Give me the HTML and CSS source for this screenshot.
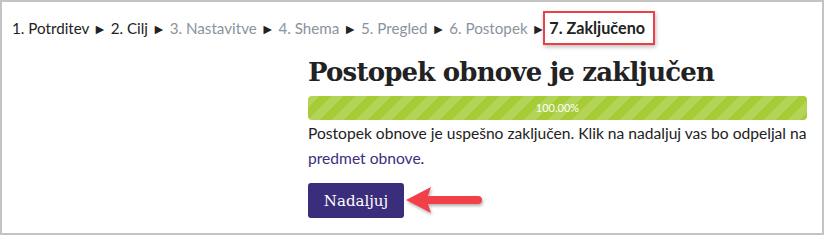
FILE: index.html
```html
<!DOCTYPE html>
<html lang="sl">
<head>
<meta charset="utf-8">
<title>Postopek obnove je zaključen</title>
<link rel="stylesheet" href="styles.css">
</head>
<body>
<div class="frame">
  <nav class="steps">
    <span class="step done">1. Potrditev</span>
    <span class="sep">►</span>
    <span class="step done">2. Cilj</span>
    <span class="sep">►</span>
    <span class="step todo">3. Nastavitve</span>
    <span class="sep">►</span>
    <span class="step todo">4. Shema</span>
    <span class="sep">►</span>
    <span class="step todo">5. Pregled</span>
    <span class="sep">►</span>
    <span class="step todo">6. Postopek</span>
    <span class="sep">►</span>
    <span class="step current">7. Zaključeno</span>
  </nav>
  <main class="content">
    <h2 class="title">Postopek obnove je zaključen</h2>
    <div class="progress"><div class="bar" style="width:100%">100.00%</div></div>
    <p class="msg">Postopek obnove je uspešno zaključen. Klik na nadaljuj vas bo odpeljal na <a href="#" class="link">predmet obnove</a>.</p>
    <div class="actions">
      <button class="btn" type="button">Nadaljuj</button>
      <svg class="arrow" width="82" height="34" viewBox="0 0 82 34">
        <defs>
          <filter id="sh" x="-20%" y="-30%" width="140%" height="170%">
            <feDropShadow dx="1" dy="2" stdDeviation="1.5" flood-color="#000" flood-opacity="0.3"/>
          </filter>
        </defs>
        <g filter="url(#sh)" fill="#f2404a">
          <path d="M2 16 L27 3 L24 12 L74 12 A4 4 0 0 1 74 20 L24 20 L27 29 Z"/>
        </g>
      </svg>
    </div>
  </main>
</div>
</body>
</html>
```
FILE: styles.css
```css
html, body {
  margin: 0;
  padding: 0;
  background: #fff;
}
.frame {
  width: 820px;
  height: 231px;
  border: 2px solid #c3c3c3;
  font-family: "Lato", "Noto Sans", sans-serif;
  color: #222;
  position: relative;
}
.steps {
  padding: 16px 0 0 10px;
  font-size: 15.2px;
  line-height: 20px;
  white-space: nowrap;
}
.step.done { color: #222; }
.step.todo { color: #8a939e; }
.sep { font-size: 14px; color: #222; }
.step.current {
  font-weight: bold;
  font-size: 16.2px;
  position: relative;
}
.step.current::after {
  content: "";
  position: absolute;
  left: -6px;
  right: -10px;
  top: -7px;
  bottom: -8px;
  border: 2px solid #ec4048;
  box-shadow: 1px 2px 4px rgba(0,0,0,0.25);
}
.content {
  padding-left: 306px;
  padding-right: 15px;
}
.title {
  font-family: "DejaVu Serif", serif;
  font-weight: bold;
  font-size: 26px;
  letter-spacing: -0.8px;
  line-height: 36px;
  margin: 15px 0 6px;
  color: #222;
}
.progress {
  height: 24px;
  border-radius: 4px;
  background: #eee;
  overflow: hidden;
}
.bar {
  height: 100%;
  background-color: #a6cc38;
  background-image: linear-gradient(135deg, rgba(255,255,255,0.15) 25%, transparent 25%, transparent 50%, rgba(255,255,255,0.15) 50%, rgba(255,255,255,0.15) 75%, transparent 75%, transparent);
  background-size: 24px 24px;
  color: #fff;
  font-size: 11px;
  line-height: 24px;
  text-align: center;
}
.msg {
  margin: 1px 0 12px;
  font-size: 15.6px;
  line-height: 25px;
}
.link {
  color: #3d2f80;
  text-decoration: none;
}
.actions {
  display: flex;
  align-items: center;
}
.btn {
  font-family: "DejaVu Serif", serif;
  font-size: 15px;
  background: #3a2d7c;
  color: #fff;
  border: none;
  border-radius: 3px;
  width: 96px;
  height: 35px;
  padding: 0;
}
.arrow {
  margin-left: 0;
  margin-top: 1px;
}
```
